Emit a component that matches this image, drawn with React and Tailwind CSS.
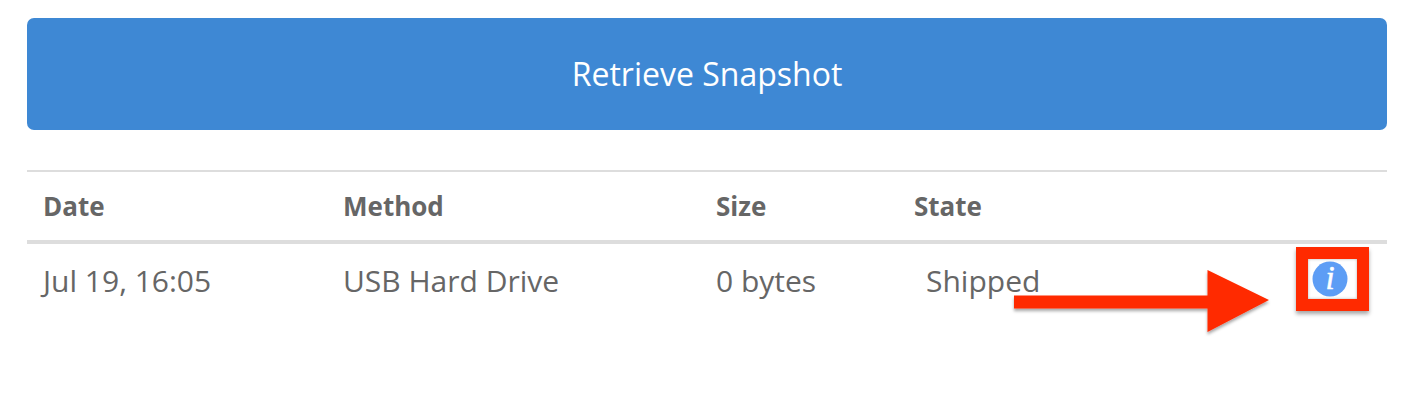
export default function App() {
  return (
    <div className="relative w-[1405px] h-[408px] bg-white overflow-hidden px-[27px] pt-[18px] pr-[18px] font-['Open_Sans',sans-serif] text-[#666666]">
      <button className="w-full h-[112px] rounded-[7px] bg-[#3e88d4] text-white text-[32px] leading-[112px] text-center">
        Retrieve Snapshot
      </button>
      <div className="mt-[40px] border-t-2 border-[#dddddd]">
        <div className="grid grid-cols-[300px_373px_198px_1fr] h-[68px] items-center pl-[16px] text-[26px] font-bold border-b-4 border-[#dddddd] box-content">
          <div>Date</div>
          <div>Method</div>
          <div>Size</div>
          <div>State</div>
        </div>
        <div className="grid grid-cols-[300px_373px_210px_1fr] h-[72px] items-center pl-[16px] text-[30px]">
          <div>Jul 19, 16:05</div>
          <div>USB Hard Drive</div>
          <div>0 bytes</div>
          <div>Shipped</div>
        </div>
      </div>
      <div className="absolute left-[1296px] top-[247px] w-[73px] h-[64px] border-[12px] border-[#ff2a00] shadow-[0_3px_4px_rgba(0,0,0,0.35),inset_0_0_3px_rgba(0,0,0,0.3)] flex items-center justify-start pl-[4px] bg-white">
        <svg width="36" height="36" viewBox="0 0 36 36" className="shrink-0">
          <circle cx="18" cy="18" r="17.5" fill="#5d9df5" />
          <text x="18" y="28" textAnchor="middle" fill="#ffffff" stroke="#ffffff" strokeWidth="0.5" fontSize="33" fontStyle="italic" fontFamily="'Liberation Serif', serif">i</text>
        </svg>
      </div>
      <svg className="absolute left-[1010px] top-[266px]" width="266" height="74" viewBox="0 0 266 74">
        <defs>
          <filter id="s" x="-5%" y="-10%" width="110%" height="130%">
            <feDropShadow dx="0" dy="2.5" stdDeviation="1.5" floodColor="#000000" floodOpacity="0.35" />
          </filter>
        </defs>
        <path d="M4 29.5H197.5V4L259 34L197.5 66V42.5H4Z" fill="#ff2a00" filter="url(#s)" />
      </svg>
    </div>
  );
}
